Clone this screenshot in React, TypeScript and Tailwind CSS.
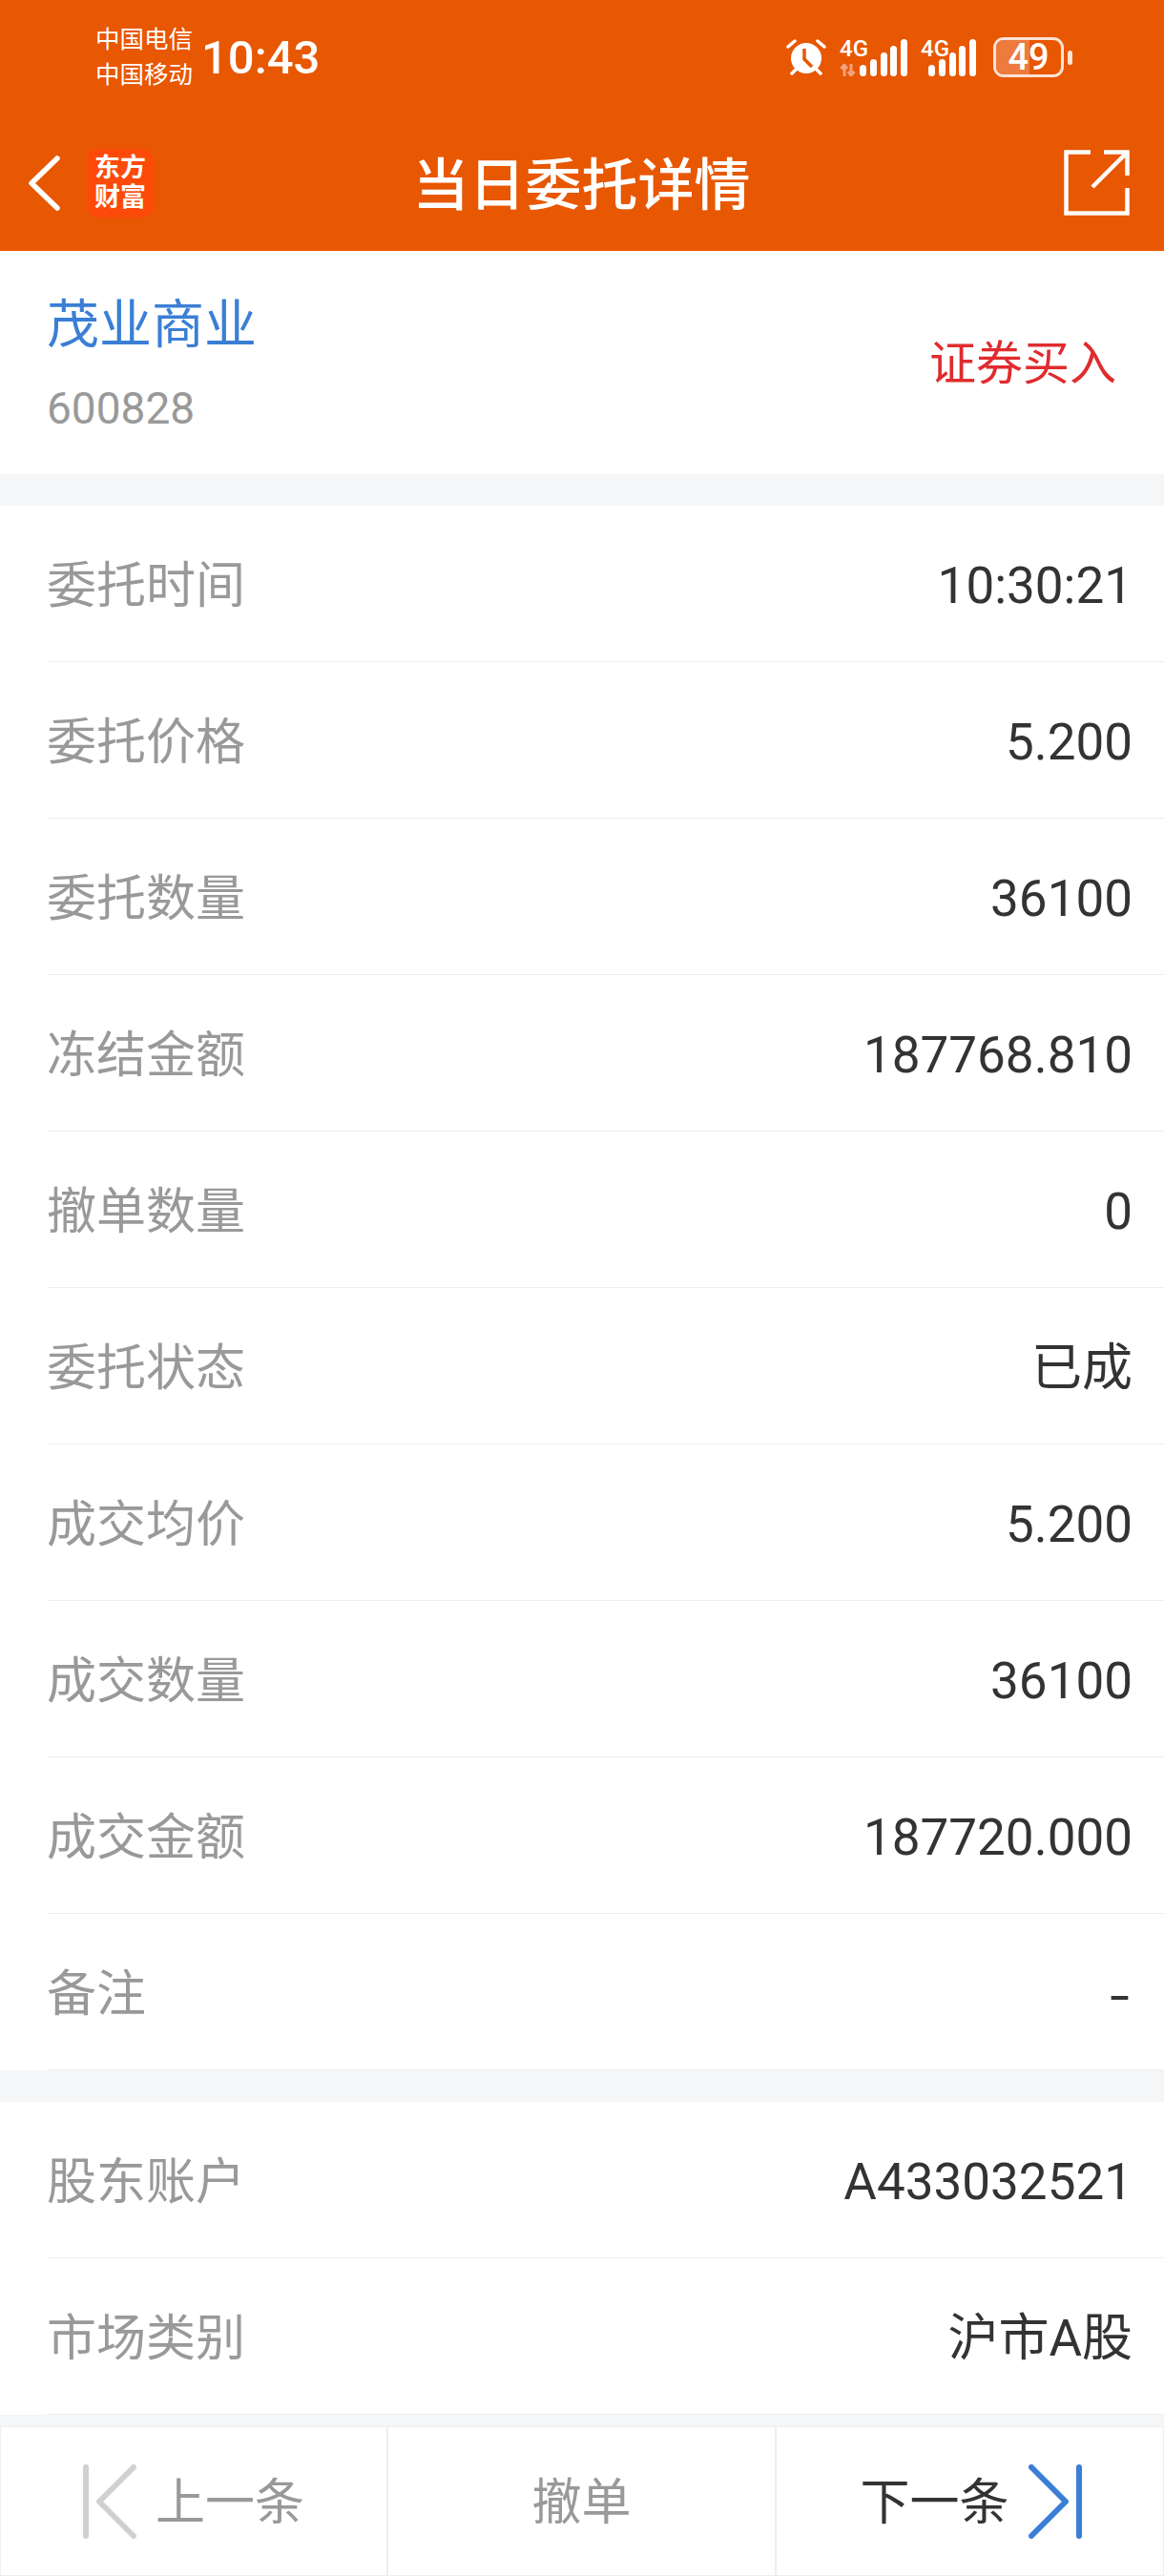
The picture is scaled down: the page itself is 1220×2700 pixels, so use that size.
const FONT = "font-['Roboto','Noto_Sans_CJK_SC',sans-serif]";

const GROUP_ONE = [
    ["委托时间", "10:30:21"],
    ["委托价格", "5.200"],
    ["委托数量", "36100"],
    ["冻结金额", "187768.810"],
    ["撤单数量", "0"],
    ["委托状态", "已成"],
    ["成交均价", "5.200"],
    ["成交数量", "36100"],
    ["成交金额", "187720.000"],
    ["备注", "-"],
];

const GROUP_TWO = [
    ["股东账户", "A433032521"],
    ["市场类别", "沪市A股"],
];

function Signal() {
    return (
        <svg width="50" height="39" viewBox="0 0 50 39" className="block">
            <rect x="0" y="27" width="7" height="12" rx="3.5" fill="#fff" />
            <rect x="11" y="21" width="7" height="18" rx="3.5" fill="#fff" />
            <rect x="22" y="14" width="7" height="25" rx="3.5" fill="#fff" />
            <rect x="32" y="7" width="7" height="32" rx="3.5" fill="#fff" />
            <rect x="43" y="0" width="7" height="39" rx="3.5" fill="#fff" />
        </svg>
    );
}

function Alarm() {
    return (
        <svg width="42" height="40" viewBox="0 0 42 40" className="block">
            <circle cx="21" cy="21" r="16" fill="#fff" />
            <path d="M2 9 L9 3 M40 9 L33 3 M6 37 L10 33 M36 37 L32 33" stroke="#fff" strokeWidth="3.5" strokeLinecap="round" />
            <path d="M19 11 V22 L27 30" stroke="#e85702" strokeWidth="3.5" fill="none" />
        </svg>
    );
}

function StatusBar() {
    return (
        <div className="flex h-[120px] items-center justify-between pl-[100px] pr-[96px] text-white">
            <div className="flex items-center gap-[9px]">
                <div className="text-[25.5px] leading-[37px]">
                    <div>中国电信</div>
                    <div>中国移动</div>
                </div>
                <div className="text-[49px] font-medium leading-none">10:43</div>
            </div>
            <div className="flex items-center">
                <Alarm />
                <div className="relative ml-[14px] h-[39px] w-[70px]">
                    <span className="absolute left-0 top-[-4px] text-[24px] font-medium leading-[28px]">4G</span>
                    <svg width="17" height="13" viewBox="0 0 17 13" className="absolute bottom-0 left-0">
                        <path d="M5 13 V2 M1.5 5 L5 1 L8 5 M12 0 V11 M9 8 L12 12 L15.5 8" stroke="#f2a27c" strokeWidth="3" fill="none" />
                    </svg>
                    <div className="absolute left-[21px] top-0">
                        <Signal />
                    </div>
                </div>
                <div className="relative ml-[15px] h-[39px] w-[57px]">
                    <span className="absolute left-0 top-[-4px] text-[24px] font-medium leading-[28px]">4G</span>
                    <div className="absolute left-[8px] top-0">
                        <Signal />
                    </div>
                </div>
                <div className="relative ml-[19px] h-[42px] w-[74px] overflow-hidden rounded-[11px] border-[3px] border-[#fbe3d6]">
                    <div className="h-full w-[35px] bg-[#ee7a3d]" />
                    <span className="absolute inset-0 flex items-center justify-center text-[38px] font-medium leading-none">49</span>
                </div>
                <div className="ml-[4px] h-[15px] w-[5px] rounded-full bg-[#fbe3d6]" />
            </div>
        </div>
    );
}

function NavBar() {
    return (
        <div className="flex h-[143px] items-center text-white">
            <div className="flex flex-1 items-center pl-[29px]">
                <svg width="34" height="58" viewBox="0 0 34 58" className="block">
                    <path d="M31 3 L4 29 L31 55" stroke="#fff" strokeWidth="5.5" fill="none" strokeLinecap="round" strokeLinejoin="round" />
                </svg>
                <div className="ml-[28px] flex h-[72px] w-[70px] flex-col items-center justify-center rounded-[12px] bg-[#fb4a0a] text-[27px] font-bold leading-[31px]">
                    <div>东方</div>
                    <div>财富</div>
                </div>
            </div>
            <div className="pl-[6px] pt-[6px] text-[59px] font-medium leading-none">当日委托详情</div>
            <div className="flex flex-1 justify-end pr-[36px]">
                <svg width="69" height="69" viewBox="0 0 69 69" className="block">
                    <path d="M28 2.5 H2.5 V66.5 H66.5 V40" stroke="#fff" strokeWidth="4.5" fill="none" />
                    <path d="M30 39 L66 3 M42 2.5 H66.5 V27" stroke="#fff" strokeWidth="4.5" fill="none" />
                </svg>
            </div>
        </div>
    );
}

function Row({ label, value }: { label: string; value: string }) {
    return (
        <div className="pl-[49px]">
            <div className="flex h-[164px] items-center justify-between border-b border-[#eeeeee] pr-[33px] pt-[6px]">
                <span className="text-[52px] text-[#999999]">{label}</span>
                {value === "-" ? (
                    <span className="mr-[3px] inline-block origin-right translate-y-[2px] scale-x-[1.4] text-[53px] text-[#333333]">-</span>
                ) : (
                    <span className="text-[53px] text-[#333333]">{value}</span>
                )}
            </div>
        </div>
    );
}

export default function App() {
    return (
        <div className={`flex h-[2700px] w-[1220px] flex-col bg-[#f5f6f8] ${FONT}`}>
            {/* Header */}
            <div className="bg-[#e85702]">
                <StatusBar />
                <NavBar />
            </div>

            {/* Stock */}
            <div className="flex h-[234px] items-center justify-between bg-white pl-[49px] pr-[50px]">
                <div>
                    <div className="text-[55px] leading-[70px] text-[#3a7fd5]">茂业商业</div>
                    <div className="mt-[25px] text-[46px] leading-[56px] text-[#999999]">600828</div>
                </div>
                <div className="pt-[3px] text-[49px] text-[#e02b2f]">证券买入</div>
            </div>

            <div className="mt-[33px] bg-white">
                {GROUP_ONE.map(([label, value]) => (
                    <Row key={label} label={label} value={value} />
                ))}
            </div>

            <div className="mt-[33px] bg-white">
                {GROUP_TWO.map(([label, value]) => (
                    <Row key={label} label={label} value={value} />
                ))}
            </div>

            {/* Footer */}
            <div className="mt-[12px] grid h-[157px] grid-cols-[406px_407px_407px] border border-[#eeeeee] bg-white">
                <div className="flex items-center justify-center gap-[20px] border-r-2 border-[#eeeeee]">
                    <svg width="56" height="78" viewBox="0 0 56 78" className="block">
                        <path d="M3 3 V75 M53 3 L17 39 L53 75" stroke="#d0d0d0" strokeWidth="6" fill="none" strokeLinecap="round" strokeLinejoin="round" />
                    </svg>
                    <span className="pt-[5px] text-[52px] text-[#999999]">上一条</span>
                </div>
                <div className="flex items-center justify-center border-r-2 border-[#eeeeee]">
                    <span className="pt-[5px] text-[52px] text-[#999999]">撤单</span>
                </div>
                <div className="flex items-center justify-center gap-[20px]">
                    <span className="pt-[5px] text-[52px] text-[#333333]">下一条</span>
                    <svg width="56" height="78" viewBox="0 0 56 78" className="block">
                        <path d="M3 3 L39 39 L3 75 M53 3 V75" stroke="#3a7fd5" strokeWidth="6" fill="none" strokeLinecap="round" strokeLinejoin="round" />
                    </svg>
                </div>
            </div>
        </div>
    );
}
